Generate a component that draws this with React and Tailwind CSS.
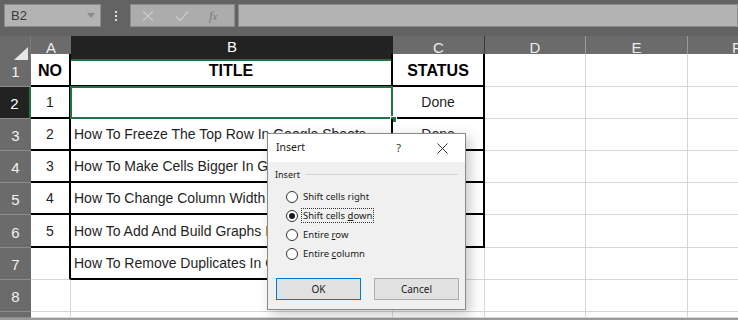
import React from "react";

const rows = [
  { n: 1, h: "h-[33px]", a: "NO", b: "TITLE", c: "STATUS", bold: true, t: true },
  { n: 2, h: "h-[32px]", a: "1", b: "", c: "Done", t: true, sel: true },
  { n: 3, h: "h-[32px]", a: "2", b: "How To Freeze The Top Row In Google Sheets", c: "Done", t: true },
  { n: 4, h: "h-[32px]", a: "3", b: "How To Make Cells Bigger In Google Sheets", c: "Done", t: true },
  { n: 5, h: "h-[32px]", a: "4", b: "How To Change Column Width In Google Sheets", c: "Done", t: true },
  { n: 6, h: "h-[33px]", a: "5", b: "How To Add And Build Graphs In Google Sheets", c: "Done", t: true },
  { n: 7, h: "h-[32px]", a: "", b: "How To Remove Duplicates In Google Sheets", c: "", b7: true },
  { n: 8, h: "h-[32px]", a: "", b: "", c: "" },
  { n: "", h: "h-[6px]", a: "", b: "", c: "" },
];

function Radio({ checked, children, focus }) {
  return (
    <div className="flex items-center h-[19px]">
      <span className="w-[12px] h-[12px] rounded-full border border-[#333] bg-white flex items-center justify-center ml-[18px]">
        {checked && <span className="w-[6px] h-[6px] rounded-full bg-[#1a1a1a]" />}
      </span>
      <span
        className={
          "ml-[3px] text-[9.5px] text-[#1a1a1a] leading-[13px] px-[1px] " +
          (focus ? "border border-dotted border-[#333]" : "border border-transparent")
        }
      >
        {children}
      </span>
    </div>
  );
}

export default function App() {
  return (
    <div className="w-[738px] h-[320px] overflow-hidden bg-[#8a8a8a] font-['Liberation_Sans',Arial,sans-serif] relative">
      {/* formula bar */}
      <div className="h-[36px] bg-[#636363] flex items-start pt-[4px] pl-[4px]">
        <div className="w-[97px] h-[23px] bg-[#b3b3b3] border border-[#8c8c8c] flex items-center justify-between pl-[6px] pr-[5px]">
          <span className="text-[13px] text-[#3a3a3a]">B2</span>
          <svg width="8" height="5" viewBox="0 0 8 5"><path d="M0 0h8L4 5z" fill="#8a8a8a" /></svg>
        </div>
        <div className="w-[29px] h-[23px] flex flex-col items-center justify-center gap-[2px]">
          <span className="w-[2px] h-[2px] bg-[#e0e0e0]" />
          <span className="w-[2px] h-[2px] bg-[#e0e0e0]" />
          <span className="w-[2px] h-[2px] bg-[#e0e0e0]" />
        </div>
        <div className="w-[105px] h-[23px] bg-[#acacac] border border-[#8c8c8c] flex items-center">
          <svg className="ml-[11px]" width="12" height="12" viewBox="0 0 12 12"><path d="M1 1l10 10M11 1L1 11" stroke="#c9c9c9" strokeWidth="1.3" /></svg>
          <svg className="ml-[21px]" width="14" height="12" viewBox="0 0 14 12"><path d="M1 6.5l4 4L13 1.5" stroke="#c9c9c9" strokeWidth="1.3" fill="none" /></svg>
          <span className="ml-[20px] text-[13px] italic text-[#7a7a7a] font-['Liberation_Serif',serif]">f<span className="text-[10px]">x</span></span>
        </div>
        <div className="ml-[3px] flex-1 h-[23px] bg-[#b3b3b3] border border-[#8c8c8c]" />
      </div>

      {/* column headers */}
      <div className="grid grid-cols-[31px_40px_322px_92px_101px_102px_1fr] h-[18px] bg-[#6b6b6b] text-[15px] text-[#ececec]">
        <div className="relative border-r border-[#7d7d7d]">
          <svg className="absolute right-[2px] bottom-[1px]" width="14" height="13" viewBox="0 0 14 13"><path d="M14 0V13H0z" fill="#e6e6e6" /></svg>
        </div>
        <div className="flex items-center justify-center">A</div>
        <div className="flex items-center justify-center bg-[#222222] text-white border-b-2 border-[#217346]">B</div>
        <div className="flex items-center justify-center border-r border-[#3a3a3a]">C</div>
        <div className="flex items-center justify-center border-r border-[#9a9a9a]">D</div>
        <div className="flex items-center justify-center border-r border-[#9a9a9a]">E</div>
        <div className="flex items-center justify-start pl-[44px]">F</div>
      </div>

      {/* rows */}
      <div className="bg-white">
        {rows.map((r, i) => {
          const tb = r.t;
          const grid = "border-[#d6d6d6]";
          return (
            <div key={i} className={"grid grid-cols-[31px_40px_322px_92px_101px_102px_1fr] " + r.h}>
              <div
                className={
                  "flex items-end justify-center pb-[3px] text-[15px] border-b " +
                  (r.sel
                    ? "bg-[#222222] text-white border-[#8c8c8c] border-r-2 border-r-[#217346]"
                    : "bg-[#6b6b6b] text-[#f2f2f2] border-[#8c8c8c]")
                }
              >
                {r.n}
              </div>
              <div
                className={
                  "flex items-center justify-center text-[14px] text-[#1f1f1f] pt-[1px] " +
                  (tb ? "border-r-2 border-b-2 border-black " : r.b7 ? "border-r-2 border-r-black border-b border-b-[#d6d6d6] " : "border-r border-b " + grid) +
                  (r.bold ? " font-bold text-[16px] text-black pt-[3px]" : "")
                }
              >
                {r.a}
              </div>
              <div
                className={
                  "relative flex items-center text-[14px] text-[#1f1f1f] whitespace-nowrap overflow-visible pt-[1px] " +
                  (tb || r.b7 ? "border-r-2 border-b-2 border-black " : "border-r border-b " + grid) +
                  (r.bold ? " justify-center font-bold text-[16px] text-black pt-[3px]" : " pl-[3px]")
                }
              >
                {r.b}
                {r.sel && (
                  <>
                    <div className="absolute left-[-1px] top-[-1px] right-[-2px] bottom-[-2px] border-2 border-[#217346]" />
                    <div className="absolute right-[-6px] bottom-[-6px] w-[7px] h-[7px] bg-[#217346] border border-white" />
                  </>
                )}
              </div>
              <div
                className={
                  "flex items-center justify-center text-[14px] text-[#1f1f1f] pt-[1px] " +
                  (tb ? "border-r-2 border-b-2 border-black " : "border-r border-b " + grid) +
                  (r.bold ? " font-bold text-[16px] text-black pt-[3px]" : "")
                }
              >
                {r.c}
              </div>
              <div className={"border-r border-b " + grid} />
              <div className={"border-r border-b " + grid} />
              <div className={"border-b " + grid} />
            </div>
          );
        })}
      </div>
      <div className="h-[2px] bg-[#9a9a9a]" />

      {/* Insert dialog */}
      <div className="absolute left-[267px] top-[133px] w-[199px] h-[177px] bg-[#f0f0f0] border border-[#8a8a8a] shadow-[4px_4px_12px_rgba(0,0,0,0.22)] font-['Noto_Sans',sans-serif] flex flex-col">
        <div className="h-[28px] bg-white flex items-center pl-[8px] pr-[17px] text-[10.5px] text-[#1a1a1a]">
          <span>Insert</span>
          <span className="ml-auto mr-[36px] text-[11px] text-[#333]">?</span>
          <svg width="11" height="11" viewBox="0 0 11 11"><path d="M0.5 0.5l10 10M10.5 0.5l-10 10" stroke="#333" strokeWidth="1" /></svg>
        </div>
        <div className="flex items-center h-[25px] pl-[7px] pr-[7px]">
          <span className="text-[9px] text-[#1a1a1a]">Insert</span>
          <span className="ml-[6px] flex-1 h-px bg-[#d5d5d5]" />
        </div>
        <div className="flex flex-col">
          <Radio>Shift cells ri<u>g</u>ht</Radio>
          <Radio checked focus>Shift cells <u>d</u>own</Radio>
          <Radio>Entire <u>r</u>ow</Radio>
          <Radio>Entire <u>c</u>olumn</Radio>
        </div>
        <div className="flex gap-[13px] pl-[8px] mt-[15px]">
          <button className="w-[85px] h-[22px] bg-[#e1e1e1] border border-[#0078d7] text-[10px] text-[#1a1a1a]">OK</button>
          <button className="w-[85px] h-[22px] bg-[#e1e1e1] border border-[#adadad] text-[10px] text-[#1a1a1a]">Cancel</button>
        </div>
      </div>
    </div>
  );
}
